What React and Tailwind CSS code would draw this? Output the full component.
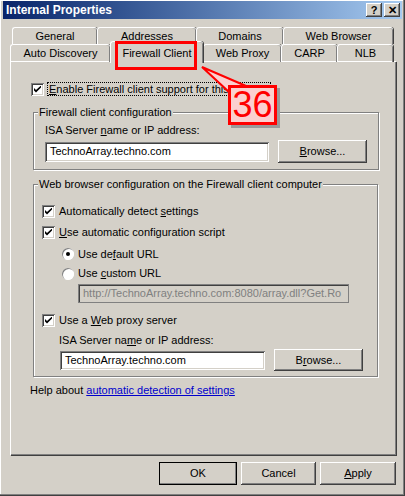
import React from 'react';

const raised =
  'bg-[#d4d0c8] shadow-[inset_-1px_-1px_#404040,inset_1px_1px_#ffffff,inset_-2px_-2px_#808080,inset_2px_2px_#d4d0c8]';
const sunken =
  'shadow-[inset_1px_1px_#808080,inset_-1px_-1px_#ffffff,inset_2px_2px_#404040,inset_-2px_-2px_#d4d0c8]';

const CheckBox = () => (
  <span className={`w-[13px] h-[13px] bg-white shrink-0 flex items-center justify-center ${sunken}`}>
    <svg width="7" height="7" viewBox="0 0 7 7">
      <path d="M0 2 L0 4.5 L2 6.5 L7 1.5 L7 -0.5 L2 4 Z" fill="#000" />
    </svg>
  </span>
);

const Radio = ({ on }) => (
  <span className="w-[12px] h-[12px] rounded-full bg-white shrink-0 flex items-center justify-center shadow-[inset_1px_1px_#808080,inset_-1px_-1px_#ffffff]">
    {on && <span className="w-[4px] h-[4px] rounded-full bg-black" />}
  </span>
);

const Button = ({ children, w, h = 'h-[23px]', extra = '' }) => (
  <div className={`${w} ${h} ${raised} ${extra} flex items-center justify-center shrink-0`}>{children}</div>
);

const Tab = ({ label, w }) => (
  <div
    className={`${w} h-full rounded-t-[3px] border-t border-l border-white shadow-[inset_-1px_0_#808080,1px_0_#404040] flex items-center justify-center`}
  >
    {label}
  </div>
);

const Group = ({ title, children, extra = '' }) => (
  <div className={`relative border border-[#808080] shadow-[1px_1px_0_#ffffff,inset_1px_1px_0_#ffffff] ${extra}`}>
    <span className="absolute -top-[8px] left-[4px] px-[1px] bg-[#d4d0c8] leading-[14px]">{title}</span>
    {children}
  </div>
);

export default function App() {
  return (
    <div className="relative w-[405px] h-[496px] bg-[#d4d0c8] text-[11px] text-black font-['Liberation_Sans',Arial,sans-serif] px-[3px] pt-[1px] shadow-[inset_-1px_-1px_#404040,inset_-2px_-2px_#808080,inset_1px_1px_#ffffff] overflow-hidden">
      {/* title bar */}
      <div className="h-[18px] bg-linear-to-r from-[#0a246a] to-[#a6caf0] flex items-center justify-between pl-[3px] pr-[2px]">
        <span className="text-white font-bold text-[12px]">Internal Properties</span>
        <div className="flex gap-[2px]">
          <div className={`w-[16px] h-[14px] ${raised} flex items-center justify-center font-bold text-[11px] leading-none`}>?</div>
          <div className={`w-[16px] h-[14px] ${raised} flex items-center justify-center font-bold text-[11px] leading-none`}>✕</div>
        </div>
      </div>

      <div className="pl-[7px]">
        {/* tabs */}
        <div className="mt-[8px] h-[17px] flex pl-[2px]">
          <Tab label="General" w="w-[85px]" />
          <Tab label="Addresses" w="w-[99px]" />
          <Tab label="Domains" w="w-[87px]" />
          <Tab label="Web Browser" w="w-[110px]" />
        </div>
        <div className="h-[18px] flex">
          <Tab label="Auto Discovery" w="w-[100px]" />
          <div className="relative z-10 w-[93px] h-[22px] -mt-[3px] rounded-t-[3px] bg-[#d4d0c8] border-t border-l border-white shadow-[inset_-1px_0_#808080,1px_0_#404040] flex items-start justify-center pt-[3px]">
            Firewall Client
          </div>
          <Tab label="Web Proxy" w="w-[78px]" />
          <Tab label="CARP" w="w-[56px]" />
          <Tab label="NLB" w="w-[56px]" />
        </div>

        {/* panel */}
        <div className="-mt-[1px] w-[386px] h-[394px] border-t border-l border-white shadow-[inset_-1px_-1px_#808080,1px_1px_#404040] pl-[20px] pr-[17px] pt-[20px]">
          <div className="h-[14px] flex items-center gap-[3px]">
            <CheckBox />
            <span className="border border-dotted border-black px-[1px] leading-[12px] w-[224px] whitespace-nowrap overflow-hidden">
              <span className="underline">E</span>nable Firewall client support for this
            </span>
          </div>

          <Group title="Firewall client configuration" extra="mt-[16px] ml-[2px] w-[346px] pl-[11px] pt-[7px] pb-[6px]">
            <div className="h-[20px] flex items-center">
              ISA Server <span className="underline ml-[3px]">n</span>ame or IP address:
            </div>
            <div className="h-[23px] flex items-center gap-[9px]">
              <div className={`w-[224px] h-[20px] bg-white ${sunken} flex items-center pl-[5px]`}>TechnoArray.techno.com</div>
              <Button w="w-[89px]"><span><span className="underline">B</span>rowse...</span></Button>
            </div>
          </Group>

          <Group title="Web browser configuration on the Firewall client computer" extra="mt-[14px] ml-[2px] w-[345px] pl-[8px] pt-[16px] pb-[5px]">
            <div className="h-[21px] flex items-center gap-[4px]">
              <CheckBox />
              <span>Automatically detect <span className="underline">s</span>ettings</span>
            </div>
            <div className="h-[21px] flex items-center gap-[4px]">
              <CheckBox />
              <span><span className="underline">U</span>se automatic configuration script</span>
            </div>
            <div className="mt-[1px] h-[20px] flex items-center gap-[4px] pl-[20px]">
              <Radio on />
              <span>Use de<span className="underline">f</span>ault URL</span>
            </div>
            <div className="h-[19px] flex items-center gap-[4px] pl-[20px]">
              <Radio />
              <span>Use <span className="underline">c</span>ustom URL</span>
            </div>
            <div className="mt-[1px] h-[19px] pl-[36px]">
              <div className="w-[271px] h-[19px] border border-[#808080] shadow-[inset_1px_1px_#404040] bg-[#d4d0c8] text-[#808080] flex items-center pl-[4px] whitespace-nowrap overflow-hidden">
                http://TechnoArray.techno.com:8080/array.dll?Get.Ro
              </div>
            </div>
            <div className="mt-[7px] h-[20px] flex items-center gap-[4px]">
              <CheckBox />
              <span>Use a <span className="underline">W</span>eb proxy server</span>
            </div>
            <div className="h-[20px] flex items-center pl-[17px]">
              <span>ISA Server na<span className="underline">m</span>e or IP address:</span>
            </div>
            <div className="-mt-[1px] h-[22px] flex items-center gap-[9px] pl-[18px]">
              <div className={`w-[205px] h-[19px] bg-white ${sunken} flex items-center pl-[5px]`}>TechnoArray.techno.com</div>
              <Button w="w-[89px]" h="h-[22px]"><span>B<span className="underline">r</span>owse...</span></Button>
            </div>
          </Group>

          <div className="mt-[6px] h-[14px] flex items-center -ml-[1px]">
            Help about&nbsp;<span className="text-[#0000cc] underline">automatic detection of settings</span>
          </div>
        </div>

        {/* dialog buttons */}
        <div className="mt-[7px] flex justify-end gap-[4px] w-[386px]">
          <Button w="w-[78px]" extra="outline outline-1 outline-black -outline-offset-1">OK</Button>
          <Button w="w-[75px]">Cancel</Button>
          <Button w="w-[76px]"><span><span className="underline">A</span>pply</span></Button>
        </div>
      </div>

      {/* annotation overlay */}
      <div className="absolute z-20 left-[115px] top-[41px] w-[82px] h-[29px] border-[3px] border-[#ff0000]" />
      <svg className="absolute z-20 left-0 top-0 pointer-events-none" width="405" height="496">
        <polygon points="202,67 246,86 229,92" fill="#fbd0d0" stroke="#ff0000" strokeWidth="2" />
      </svg>
      <div className="absolute z-20 left-[228px] top-[85px] w-[49px] h-[40px] bg-[#fbd0d0] border-[3px] border-[#ff0000] shadow-[3px_3px_0_#9a9a9a] flex items-center justify-center text-[#ff0000] text-[36px] leading-none font-['Liberation_Sans',Arial,sans-serif]">
        36
      </div>
    </div>
  );
}
